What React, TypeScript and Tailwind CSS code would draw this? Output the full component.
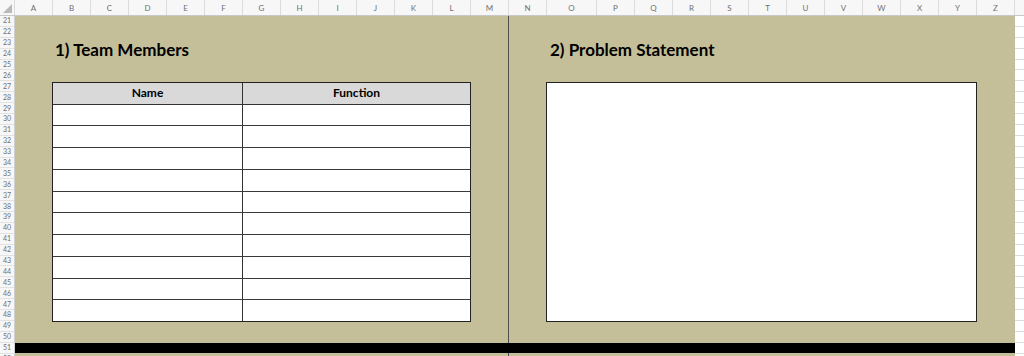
const columns = ["A", "B", "C", "D", "E", "F", "G", "H", "I", "J", "K", "L", "M", "N", "O", "P", "Q", "R", "S", "T", "U", "V", "W", "X", "Y", "Z"]
const rowNumbers = Array.from({ length: 32 }, (_, i) => 21 + i)
const memberRows = Array.from({ length: 10 }, (_, i) => i)

function ColumnHeader() {
  return (
    <div className="flex h-[16px] border-b border-[#c8c8c8] bg-[#f7f7f7]">
      <div className="relative w-[15px] border-r border-[#dadada]">
        <svg className="absolute bottom-[2px] right-[2px]" width="9" height="9" viewBox="0 0 9 9">
          <polygon points="9,0 9,9 0,9" fill="#b9b9b9" />
        </svg>
      </div>
      <div className="grid grid-cols-[repeat(14,38px)_50px_repeat(11,38px)]">
        {columns.map((c) => (
          <div
            key={c}
            className="flex items-center justify-center border-r border-[#dcdcdc] text-[8px] text-[#707070]"
          >
            {c}
          </div>
        ))}
      </div>
      <div className="flex-1" />
    </div>
  )
}

function RowHeader() {
  return (
    <div className="w-[15px] shrink-0 border-r border-[#d0d0d0] bg-[#f7f7f7]">
      {rowNumbers.map((n) => (
        <div
          key={n}
          className="flex h-[10.9px] items-center justify-center border-b border-[#e2e2e2] text-[7px] leading-none text-[#707070]"
        >
          {n}
        </div>
      ))}
    </div>
  )
}

function TeamTable() {
  return (
    <div className="mt-[22px] flex h-[240px] w-[419px] flex-col border border-[#222]">
      <div className="flex flex-1 border-b border-[#333] bg-[#d9d9d9] text-[12px] font-bold text-black">
        <div className="flex w-[190px] items-end justify-center border-r border-[#333] pb-[2px]">Name</div>
        <div className="flex flex-1 items-end justify-center pb-[2px]">Function</div>
      </div>
      {memberRows.map((r) => (
        <div
          key={r}
          className={`flex flex-1 bg-white ${r < memberRows.length - 1 ? "border-b border-[#3a3a3a]" : ""}`}
        >
          <div className="w-[190px] border-r border-[#333]" />
          <div className="flex-1" />
        </div>
      ))}
    </div>
  )
}

export default function App() {
  return (
    <div className="h-[356px] w-[1024px] overflow-hidden bg-white font-['Lato','Liberation_Sans',sans-serif]">
      <ColumnHeader />
      <div className="flex">
        <RowHeader />
        <div className="flex h-[340px] w-[1000px] shrink-0 flex-col bg-[#c4bf98]">
          <div className="flex h-[327px]">
            <div className="w-[494px] border-r border-[#4d4d4d] pl-[37px] pt-[24px]">
              <h2 className="ml-[3px] h-[20px] text-[17px] font-bold leading-[20px] text-black">1) Team Members</h2>
              <TeamTable />
            </div>
            <div className="flex-1 pl-[37px] pt-[24px]">
              <h2 className="ml-[4px] h-[20px] text-[17px] font-bold leading-[20px] text-black">2) Problem Statement</h2>
              <div className="mt-[22px] h-[240px] w-[431px] border border-[#222] bg-white" />
            </div>
          </div>
          <div className="h-[10px] bg-black" />
          <div className="flex flex-1">
            <div className="w-[494px] border-r border-[#4d4d4d]" />
          </div>
        </div>
        <div className="flex-1">
          {rowNumbers.map((n) => (
            <div key={n} className="h-[10.9px] border-b border-[#dcdcdc]" />
          ))}
        </div>
      </div>
    </div>
  )
}
